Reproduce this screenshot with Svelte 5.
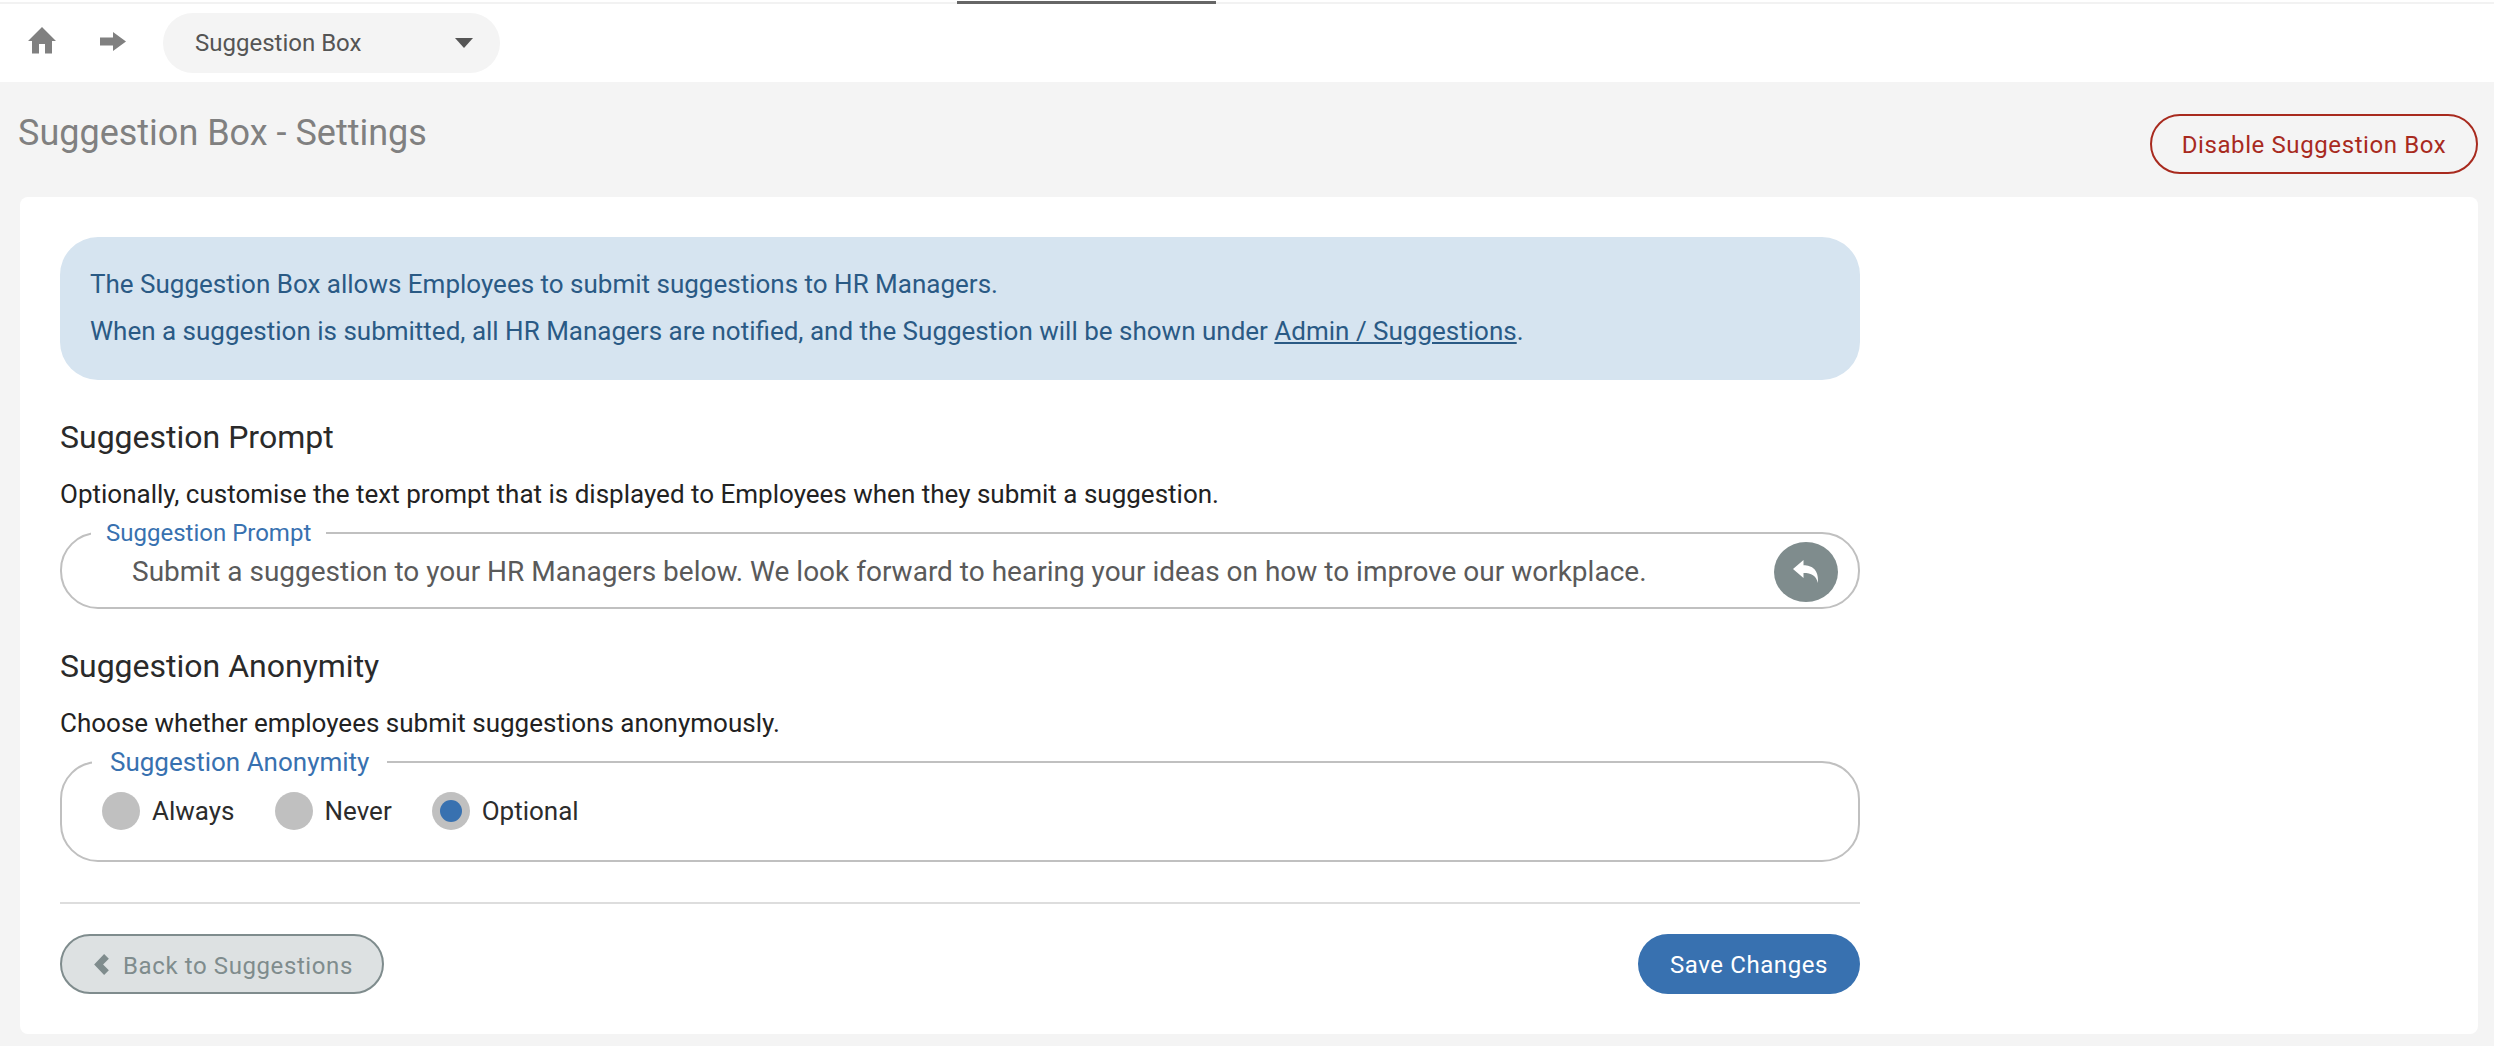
<script>
  let anonymity = $state("Optional");
  const options = ["Always", "Never", "Optional"];
</script>

<div class="topline"><span class="tab-mark"></span></div>

<nav class="nav">
  <svg class="home" viewBox="0 0 28 27" aria-hidden="true">
    <path d="M14 0 L28 14 H24 V26.5 H17 V17 H11 V26.5 H4 V14 H0 Z" />
  </svg>
  <svg class="arrow" viewBox="0 0 26 19" aria-hidden="true">
    <path d="M0 5.5 H13 V0 L26 9.5 L13 19 V13.5 H0 Z" />
  </svg>
  <div class="select">
    <span>Suggestion Box</span>
    <span class="caret"></span>
  </div>
</nav>

<main class="page">
  <header class="page-head">
    <h1>Suggestion Box - Settings</h1>
    <button class="btn-disable">Disable Suggestion Box</button>
  </header>

  <section class="card">
    <div class="column">
      <div class="info">
        <p>The Suggestion Box allows Employees to submit suggestions to HR Managers.</p>
        <p>When a suggestion is submitted, all HR Managers are notified, and the Suggestion will be shown under <a href="#admin">Admin / Suggestions</a>.</p>
      </div>

      <h2>Suggestion Prompt</h2>
      <p class="hint">Optionally, customise the text prompt that is displayed to Employees when they submit a suggestion.</p>
      <fieldset class="field prompt">
        <legend>Suggestion Prompt</legend>
        <span class="value">Submit a suggestion to your HR Managers below. We look forward to hearing your ideas on how to improve our workplace.</span>
        <button class="undo" aria-label="Reset">
          <svg viewBox="0 0 26 24" aria-hidden="true">
            <path d="M0 9 L10.5 0 V5.2 C19 5.2 26 9.5 25 23 C23 15.5 18.5 13 10.5 13 V18 Z" />
          </svg>
        </button>
      </fieldset>

      <h2 class="second">Suggestion Anonymity</h2>
      <p class="hint">Choose whether employees submit suggestions anonymously.</p>
      <fieldset class="field radios">
        <legend>Suggestion Anonymity</legend>
        {#each options as option}
          <button class="radio" onclick={() => (anonymity = option)}>
            <span class="dot" class:checked={anonymity === option}></span>
            {option}
          </button>
        {/each}
      </fieldset>

      <hr />

      <div class="actions">
        <button class="btn-back">
          <svg viewBox="0 0 14 20" aria-hidden="true"><path d="M0 10 L9.5 0 L14 4.5 L8.5 10 L14 15.5 L9.5 20 Z" /></svg>
          Back to Suggestions
        </button>
        <button class="btn-save">Save Changes</button>
      </div>
    </div>
  </section>
</main>

<style>
  :global(body) {
    background: #f4f4f4;
    font-family: Roboto, "Liberation Sans", sans-serif;
  }

  .topline {
    height: 2px;
    padding-top: 2px;
    background: #fff;
    position: relative;
  }

  .topline::after {
    content: "";
    display: block;
    height: 2px;
    background: #f2f2f2;
  }

  .tab-mark {
    position: absolute;
    left: 957px;
    top: 1px;
    width: 259px;
    height: 3px;
    background: #666;
  }

  .nav {
    display: flex;
    align-items: center;
    height: 78px;
    background: #fff;
    padding: 0 0 0 28px;
    box-sizing: border-box;
  }

  .home {
    width: 28px;
    height: 27px;
    margin-top: -6px;
    fill: #808080;
  }

  .arrow {
    width: 26px;
    height: 19px;
    margin-top: -3px;
    margin-left: 44px;
    fill: #808080;
  }

  .select {
    display: flex;
    align-items: center;
    justify-content: space-between;
    width: 337px;
    height: 60px;
    margin-left: 37px;
    padding: 0 27px 0 32px;
    box-sizing: border-box;
    border-radius: 30px;
    background: #f4f4f4;
    color: #555;
    font-size: 24px;
  }

  .caret {
    width: 0;
    height: 0;
    border-left: 9px solid transparent;
    border-right: 9px solid transparent;
    border-top: 10px solid #555;
  }

  .page {
    padding: 0 16px 12px 20px;
  }

  .page-head {
    display: flex;
    justify-content: space-between;
    align-items: flex-start;
    height: 115px;
    margin-left: -2px;
  }

  h1 {
    margin: 29px 0 0;
    font-size: 36px;
    line-height: 44px;
    font-weight: 400;
    color: #808080;
  }

  button {
    font-family: inherit;
    cursor: pointer;
  }

  .btn-disable {
    width: 328px;
    height: 60px;
    margin-top: 32px;
    padding-top: 3px;
    border: 2px solid #a82a1e;
    border-radius: 30px;
    background: transparent;
    color: #a82a1e;
    font-size: 24px;
    letter-spacing: 0.6px;
  }

  .card {
    height: 837px;
    box-sizing: border-box;
    padding: 40px 40px 0;
    border-radius: 8px;
    background: #fff;
  }

  .column {
    width: 1800px;
  }

  .info {
    padding: 24px 30px 25px;
    border-radius: 38px;
    background: #d6e4f0;
    color: #2a5a85;
    font-size: 26px;
    line-height: 47px;
  }

  .info p {
    margin: 0;
  }

  .info a {
    color: #2a5a85;
  }

  h2 {
    margin: 38px 0 0;
    font-size: 32px;
    line-height: 38px;
    font-weight: 400;
    color: #2a2a2a;
  }

  h2.second {
    margin-top: 38px;
  }

  .hint {
    margin: 20px 0 0;
    font-size: 26px;
    line-height: 36px;
    color: #222;
  }

  .field {
    margin: 0;
    min-width: 0;
    border: 2px solid #c0c0c0;
    background: #fff;
    box-sizing: border-box;
  }

  legend {
    color: #3871b0;
    line-height: 30px;
  }

  .prompt {
    display: flex;
    align-items: center;
    justify-content: space-between;
    height: 91px;
    margin-top: 6px;
    padding: 0 20px 0 70px;
    border-radius: 38px;
  }

  .prompt legend {
    margin-left: -41px;
    padding: 0 15px;
    font-size: 24px;
  }

  .value {
    margin-top: -12px;
    font-size: 28px;
    color: #5a5a5a;
  }

  .undo {
    display: flex;
    align-items: center;
    justify-content: center;
    width: 64px;
    height: 60px;
    margin-top: -12px;
    padding: 0;
    border: none;
    border-radius: 50%;
    background: #7f8c8d;
  }

  .undo svg {
    width: 26px;
    height: 24px;
    fill: #fff;
  }

  .radios {
    display: flex;
    align-items: flex-start;
    gap: 40px;
    height: 115px;
    margin-top: 6px;
    padding: 15px 0 0 40px;
    border-radius: 38px;
  }

  .radios legend {
    margin-left: -10px;
    padding: 0 18px;
    font-size: 26px;
  }

  .radio {
    display: flex;
    align-items: center;
    gap: 12px;
    padding: 0;
    border: none;
    background: none;
    color: #2c2c2c;
    font-size: 26px;
  }

  .dot {
    display: flex;
    align-items: center;
    justify-content: center;
    width: 38px;
    height: 38px;
    border-radius: 50%;
    background: #c0c0c0;
  }

  .dot.checked::after {
    content: "";
    width: 22px;
    height: 22px;
    border-radius: 50%;
    background: #3871b0;
  }

  hr {
    height: 2px;
    margin: 40px 0 0;
    border: none;
    background: #ddd;
  }

  .actions {
    display: flex;
    justify-content: space-between;
    margin-top: 30px;
  }

  .btn-back {
    display: flex;
    align-items: center;
    justify-content: center;
    gap: 14px;
    width: 324px;
    height: 60px;
    padding: 3px 0 0 3px;
    border: 2px solid #7f8c8d;
    border-radius: 30px;
    background: #dde1e2;
    color: #7f8c8d;
    font-size: 24px;
    letter-spacing: 0.6px;
  }

  .btn-back svg {
    width: 15px;
    height: 21px;
    margin-top: -3px;
    fill: #7f8c8d;
  }

  .btn-save {
    width: 222px;
    height: 60px;
    padding-top: 3px;
    border: none;
    border-radius: 30px;
    background: #3871b0;
    color: #fff;
    font-size: 24px;
    letter-spacing: 0.6px;
  }
</style>
